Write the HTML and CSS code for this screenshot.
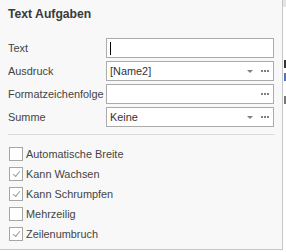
FILE: index.html
```html
<!DOCTYPE html>
<html lang="de">
<head>
  <meta charset="UTF-8">
  <title>Text Aufgaben</title>
  <link rel="stylesheet" href="styles.css">
</head>
<body>
  <div class="hintergrund">
    <span class="marke marke-blau"></span>
    <span class="marke marke-kopf"></span>
    <span class="marke marke-t"></span>
    <span class="marke marke-i"></span>
    <span class="marke marke-grau"></span>
  </div>

  <div class="panel">
    <div class="titel">Text Aufgaben</div>

    <div class="felder">
      <label>Text</label>
      <div class="feld"><span class="cursor"></span></div>

      <label>Ausdruck</label>
      <div class="feld">
        <span class="wert">[Name2]</span>
        <span class="pfeil"></span>
        <span class="punkte"><i></i><i></i><i></i></span>
      </div>

      <label>Formatzeichenfolge</label>
      <div class="feld">
        <span class="wert"></span>
        <span class="punkte"><i></i><i></i><i></i></span>
      </div>

      <label>Summe</label>
      <div class="feld">
        <span class="wert">Keine</span>
        <span class="pfeil"></span>
        <span class="punkte"><i></i><i></i><i></i></span>
      </div>
    </div>

    <div class="trenner"></div>

    <div class="optionen">
      <div class="option"><span class="box"></span>Automatische Breite</div>
      <div class="option"><span class="box an"></span>Kann Wachsen</div>
      <div class="option"><span class="box an"></span>Kann Schrumpfen</div>
      <div class="option"><span class="box"></span>Mehrzeilig</div>
      <div class="option"><span class="box an"></span>Zeilenumbruch</div>
    </div>
  </div>
</body>
</html>
```

FILE: styles.css
```css
body {
  margin: 0;
  background-color: #fff;
  font-family: "Liberation Sans", Arial, sans-serif;
  font-size: 10.9px;
  color: #444;
  overflow: hidden;
}
.hintergrund {
  position: absolute;
  top: 0;
  left: 0;
  width: 286px;
  height: 252px;
}
.marke {
  position: absolute;
}
.marke-blau {
  left: 0;
  top: 2px;
  width: 2px;
  height: 7px;
  background-color: #3c78c8;
}
.marke-kopf {
  left: 283px;
  top: 0;
  width: 3px;
  height: 7px;
  background-color: #e4e4e4;
}
.marke-t {
  left: 284px;
  top: 60px;
  width: 2px;
  height: 8px;
  background-color: #333;
}
.marke-i {
  left: 284px;
  top: 73px;
  width: 2px;
  height: 8px;
  background-color: #5b6fc0;
}
.marke-grau {
  left: 284px;
  top: 96px;
  width: 2px;
  height: 8px;
  background-color: #777;
}
.panel {
  position: relative;
  width: 274px;
  height: 243px;
  padding: 6px 0 0 8px;
  background-color: #f8f8f8;
  border-left: 1px solid #d0d0d0;
  border-right: 1px solid #c6c6c6;
  border-bottom: 1px solid #c6c6c6;
  margin-left: -1px;
}
.titel {
  font-weight: bold;
  font-size: 12.2px;
  color: #3a3a3a;
  height: 16px;
  line-height: 16px;
}
.felder {
  display: grid;
  grid-template-columns: 98px 168px;
  row-gap: 3px;
  margin-top: 16px;
}
.felder label {
  line-height: 20px;
  white-space: nowrap;
}
.feld {
  box-sizing: border-box;
  height: 20px;
  border: 1px solid #ababab;
  background-color: #fff;
  display: flex;
  align-items: center;
  padding: 0 4px 0 3px;
}
.wert {
  flex: 1;
  color: #333;
}
.cursor {
  width: 1px;
  height: 13px;
  background-color: #000;
}
.pfeil {
  width: 0;
  height: 0;
  border-left: 3px solid transparent;
  border-right: 3px solid transparent;
  border-top: 3px solid #808080;
  margin-right: 8px;
}
.punkte {
  display: flex;
  gap: 1px;
}
.punkte i {
  width: 2px;
  height: 2px;
  background-color: #808080;
}
.trenner {
  width: 267px;
  height: 1px;
  background-color: #dcdcdc;
  margin-top: 7px;
}
.optionen {
  margin-top: 9px;
}
.option {
  display: flex;
  align-items: center;
  height: 20px;
  color: #444;
}
.box {
  box-sizing: border-box;
  width: 14px;
  height: 14px;
  border: 1px solid #a6a6a6;
  background-color: #fff;
  margin: 0 3px 0 1px;
  position: relative;
}
.box.an::after {
  content: "";
  position: absolute;
  left: 3px;
  top: 3px;
  width: 6px;
  height: 3px;
  border-left: 1px solid #9a9a9a;
  border-bottom: 1px solid #9a9a9a;
  transform: rotate(-50deg);
}
```
